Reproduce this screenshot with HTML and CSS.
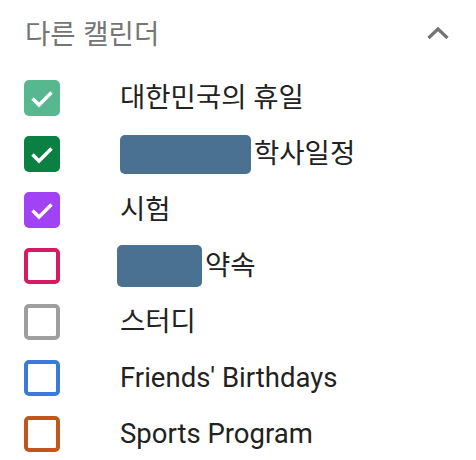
FILE: index.html
```html
<!DOCTYPE html>
<html lang="ko">
<head>
<meta charset="utf-8">
<link rel="stylesheet" href="styles.css">
</head>
<body>
<div class="panel">
  <div class="header">
    <span class="title">다른 캘린더</span>
    <svg class="chevron" width="24" height="14" viewBox="0 0 24 14"><path d="M2.5 12 L12 3 L21.5 12" fill="none" stroke="#757575" stroke-width="3.2"/></svg>
  </div>
  <ul class="list">
    <li class="row"><span class="box checked c1"><svg viewBox="0 0 36 36" width="36" height="36"><path d="M8.5 18.5 L15 25 L27.5 12.5" fill="none" stroke="#fff" stroke-width="3.4"/></svg></span><span class="label">대한민국의 휴일</span></li>
    <li class="row"><span class="box checked c2"><svg viewBox="0 0 36 36" width="36" height="36"><path d="M8.5 18.5 L15 25 L27.5 12.5" fill="none" stroke="#fff" stroke-width="3.4"/></svg></span><span class="label"><span class="redact r1"></span>학사일정</span></li>
    <li class="row"><span class="box checked c3"><svg viewBox="0 0 36 36" width="36" height="36"><path d="M8.5 18.5 L15 25 L27.5 12.5" fill="none" stroke="#fff" stroke-width="3.4"/></svg></span><span class="label">시험</span></li>
    <li class="row"><span class="box c4"></span><span class="label shift"><span class="redact r2"></span>약속</span></li>
    <li class="row"><span class="box c5"></span><span class="label">스터디</span></li>
    <li class="row"><span class="box c6"></span><span class="label">Friends' Birthdays</span></li>
    <li class="row"><span class="box c7"></span><span class="label">Sports Program</span></li>
  </ul>
</div>
</body>
</html>
```

FILE: styles.css
```css
html, body {
  margin: 0;
  padding: 0;
  background: #fff;
}
.panel {
  width: 476px;
  font-family: Roboto, "Noto Sans CJK KR", sans-serif;
}
.header {
  height: 66px;
  display: flex;
  align-items: center;
  justify-content: space-between;
  padding: 0 26px 4px 25px;
}
.title {
  font-family: "Noto Sans CJK KR", sans-serif;
  font-size: 27.5px;
  color: #757575;
  line-height: 1;
}
.chevron {
  display: block;
}
.list {
  list-style: none;
  margin: 0;
  padding: 0;
}
.row {
  height: 56px;
  display: flex;
  align-items: center;
  padding-left: 24px;
}
.box {
  width: 36px;
  height: 36px;
  box-sizing: border-box;
  border-radius: 5px;
  border: 4px solid;
  flex: none;
  background: #fff;
}
.box.checked {
  border: none;
}
.box svg {
  display: block;
}
.c1 { background: #57b890; }
.c2 { background: #0b8043; }
.c3 { background: #a142f4; }
.c4 { border-color: #d81b60; }
.c5 { border-color: #9e9e9e; }
.c6 { border-color: #3a7ad8; }
.c7 { border-color: #c0561a; }
.label {
  margin-left: 60px;
  font-size: 27.5px;
  color: #222;
  display: flex;
  align-items: center;
  line-height: 1;
  font-family: Roboto, "Noto Sans CJK KR", sans-serif;
}
.label.shift {
  margin-left: 57px;
}
.redact {
  display: inline-block;
  background: #4a7191;
  border-radius: 5px;
  margin-right: 3px;
}
.r1 { width: 131px; height: 39px; }
.r2 { width: 85px; height: 42px; }
```
